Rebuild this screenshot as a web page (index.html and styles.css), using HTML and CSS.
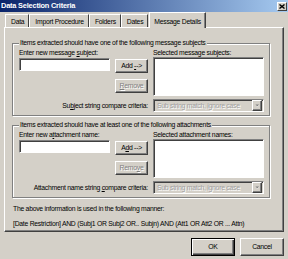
FILE: index.html
```html
<!DOCTYPE html>
<html lang="en">

<head>
    <meta charset="UTF-8">
    <title>Data Selection Criteria</title>
    <link rel="stylesheet" href="styles.css">
</head>

<body>
    <div class="dialog">
        <!-- Title bar -->
        <div class="titlebar">
            <span class="title">Data Selection Criteria</span>
            <span class="close-btn">
                <svg width="6" height="5" viewBox="0 0 6 5"><path d="M0.5 0.5L5.5 4.5M5.5 0.5L0.5 4.5" stroke="#000" stroke-width="1.4" fill="none"/></svg>
            </span>
        </div>

        <!-- Tabs -->
        <div class="tabs">
            <div class="tab">Data</div>
            <div class="tab">Import Procedure</div>
            <div class="tab">Folders</div>
            <div class="tab">Dates</div>
            <div class="tab active">Message Details</div>
        </div>

        <div class="panel">
            <fieldset class="group">
                <legend>Items extracted should have one of the following message subjects</legend>
                <div class="group-body">
                    <label class="field-label">Enter new message <u>s</u>ubject:</label>
                    <label class="list-label">Selected message subjects:</label>
                    <div class="textbox sunken"></div>
                    <div class="btn-stack">
                        <button class="btn">Add <u>-</u>-&gt;</button>
                        <button class="btn" disabled><u>R</u>emove</button>
                    </div>
                    <div class="listbox sunken"></div>
                    <label class="criteria-label">Su<u>b</u>ject string compare criteria:</label>
                    <div class="combo sunken">
                        <span>Sub string match, ignore case</span>
                        <span class="combo-arrow">
                            <svg width="5" height="4" viewBox="0 0 5 4"><path d="M1 1.5H4L2.5 3Z" fill="#fff"/><path d="M0.5 0.5H4L2.25 2.5Z" fill="#808080"/></svg>
                        </span>
                    </div>
                </div>
            </fieldset>

            <fieldset class="group">
                <legend>Items extracted should have at least one of the following attachments</legend>
                <div class="group-body">
                    <label class="field-label">Enter new a<u>t</u>tachment name:</label>
                    <label class="list-label">Selected attachment names:</label>
                    <div class="textbox sunken"></div>
                    <div class="btn-stack">
                        <button class="btn">A<u>d</u>d --&gt;</button>
                        <button class="btn" disabled>Remo<u>v</u>e</button>
                    </div>
                    <div class="listbox sunken"></div>
                    <label class="criteria-label">Attachment name string <u>c</u>ompare criteria:</label>
                    <div class="combo sunken">
                        <span>Sub string match, ignore case</span>
                        <span class="combo-arrow">
                            <svg width="5" height="4" viewBox="0 0 5 4"><path d="M1 1.5H4L2.5 3Z" fill="#fff"/><path d="M0.5 0.5H4L2.25 2.5Z" fill="#808080"/></svg>
                        </span>
                    </div>
                </div>
            </fieldset>

            <p class="note">The above information is used in the following manner:</p>
            <p class="note formula">[Date Restriction] AND (Subj1 OR Subj2 OR.. Subjn) AND (Att1 OR Att2 OR ... Attn)</p>
        </div>

        <div class="actions">
            <button class="btn action default">OK</button>
            <button class="btn action">Cancel</button>
        </div>
    </div>
</body>

</html>
```

FILE: styles.css
```css
* {
    box-sizing: border-box;
}

body {
    margin: 0;
    background-color: #d4d0c8;
    font-family: "Liberation Sans", Arial, sans-serif;
    font-size: 6.8px;
    letter-spacing: -0.25px;
    line-height: 8px;
    color: #000;
}

.dialog {
    width: 288px;
    height: 259px;
    overflow: hidden;
    white-space: nowrap;
}

/* title bar */
.titlebar {
    height: 12px;
    display: flex;
    align-items: center;
    justify-content: space-between;
    padding: 0 1px 0 1px;
    background: linear-gradient(to right, #0a246a, #a6caf0);
}

.title {
    color: #fff;
    font-weight: bold;
    font-size: 7.4px;
    letter-spacing: -0.2px;
}

.close-btn {
    width: 10px;
    height: 9px;
    display: flex;
    align-items: center;
    justify-content: center;
    background-color: #d4d0c8;
    border: 1px solid;
    border-color: #fff #404040 #404040 #fff;
}

/* tabs */
.tabs {
    display: flex;
    align-items: flex-end;
    height: 15px;
    padding-left: 5px;
}

.tab {
    height: 13px;
    padding: 3px 4px 0 5px;
    border-top: 1px solid #fff;
    border-left: 1px solid #fff;
    border-right: 1px solid #404040;
}

.tab.active {
    position: relative;
    z-index: 1;
    height: 16px;
    margin-bottom: -1px;
    margin-left: 1px;
    padding: 5px 4px 0 4px;
    background-color: #d4d0c8;
    box-shadow: inset -1px 0 0 #808080;
}

/* main panel */
.panel {
    margin-left: 4px;
    width: 280px;
    height: 205px;
    padding: 11px 0 0 7px;
    border: 1px solid;
    border-color: #fff #404040 #404040 #fff;
    box-shadow: inset -1px -1px 0 #808080;
}

.group {
    width: 258px;
    min-width: 0;
    margin: 0;
    padding: 0 6px 3px 6px;
    border: 1px solid #808080;
    box-shadow: inset 1px 1px 0 #fff, 1px 1px 0 #fff;
}

.group + .group {
    margin-top: 5px;
}

.group legend {
    padding: 0 1px;
    background-color: #d4d0c8;
}

.group-body {
    display: grid;
    grid-template-columns: 91px 33px 111px;
    column-gap: 5px;
    padding-top: 2px;
}

.field-label {
    grid-column: 1 / 3;
}

.list-label {
    grid-column: 3;
}

.sunken {
    border: 1px solid;
    border-color: #808080 #fff #fff #808080;
    box-shadow: inset 1px 1px 0 #404040;
}

.textbox {
    height: 13px;
    margin-top: 1px;
    background-color: #fff;
}

.btn-stack {
    display: flex;
    flex-direction: column;
    gap: 6px;
    margin-top: 2px;
}

.listbox {
    height: 39px;
    background-color: #fff;
}

.criteria-label {
    grid-column: 1 / 3;
    align-self: center;
    text-align: right;
    margin-top: 3px;
}

.combo {
    grid-column: 3;
    height: 13px;
    margin-top: 3px;
    display: flex;
    align-items: center;
    justify-content: space-between;
    padding: 1px 1px 1px 3px;
    color: #a0a0a0;
    text-shadow: 1px 1px 0 #fff;
}

.combo-arrow {
    width: 10px;
    height: 11px;
    display: flex;
    align-items: center;
    justify-content: center;
    border: 1px solid;
    border-color: #fff #404040 #404040 #fff;
    box-shadow: inset -1px -1px 0 #808080;
}

/* buttons */
.btn {
    height: 14px;
    padding: 0;
    font: inherit;
    letter-spacing: inherit;
    color: #000;
    background-color: #d4d0c8;
    border: 1px solid;
    border-color: #fff #404040 #404040 #fff;
    box-shadow: inset -1px -1px 0 #808080;
}

.btn:disabled {
    color: #808080;
    text-shadow: 1px 1px 0 #fff;
}

.note {
    margin: 7px 0 0 1px;
}

.note.formula {
    margin-top: 7px;
}

.actions {
    display: flex;
    justify-content: flex-end;
    gap: 5px;
    margin-top: 6px;
    padding-right: 4px;
}

.btn.action {
    width: 44px;
    height: 18px;
}

.btn.default {
    border-color: #000;
    box-shadow: inset 1px 1px 0 #fff, inset -1px -1px 0 #404040, inset -2px -2px 0 #808080;
}
```
